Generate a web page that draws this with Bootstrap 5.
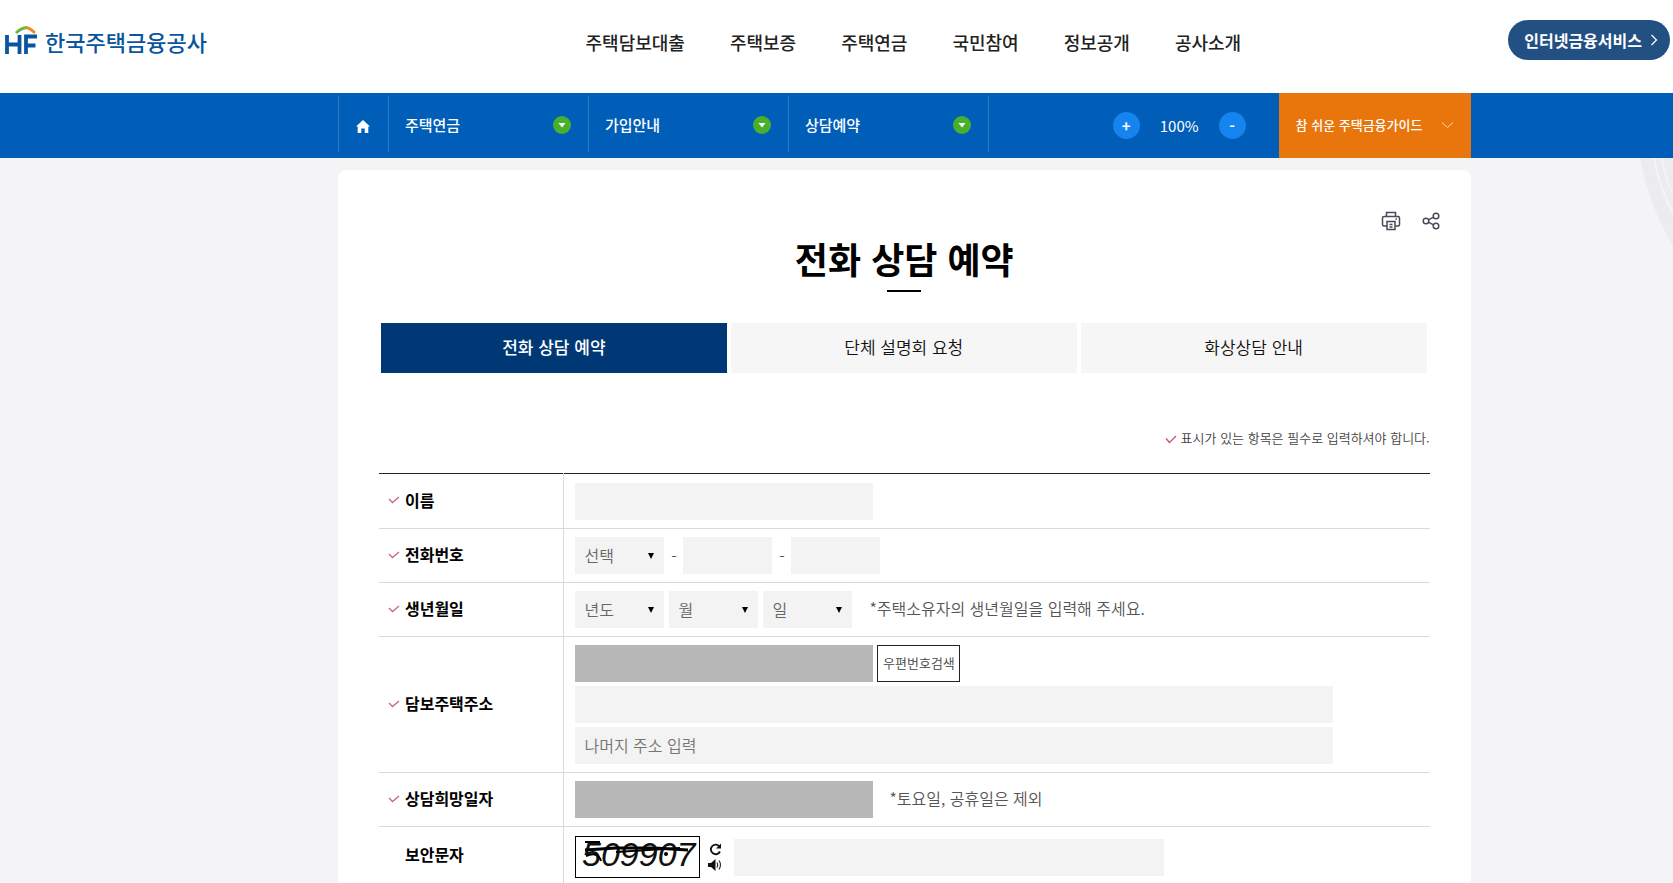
<!DOCTYPE html>
<html lang="ko">
<head>
<meta charset="utf-8">
<meta name="viewport" content="width=device-width, initial-scale=1">
<title>전화 상담 예약 - 한국주택금융공사</title>
<link href="https://cdn.jsdelivr.net/npm/bootstrap@5.3.0/dist/css/bootstrap.min.css" rel="stylesheet">
<style>
  body { font-family: "Noto Sans CJK KR", "Noto Sans", sans-serif; font-size: 16px; line-height: 24px; background: #f4f4f6; color: #222; }
  a { color: inherit; text-decoration: none; }
  .site-top { height: 93px; background: #fff; }
  .side-brand { flex: 0 0 35%; }
  .logo-name { font-size: 22px; font-weight: 500; color: #0a55a0; }
  .gnb { gap: 45px; font-size: 18px; font-weight: 500; color: #222; margin-bottom: 10px; }
  .side-link { margin-bottom: 13px; padding-right: 3px; }
  .pill { height: 40px; border: 0; border-radius: 20px; background: #235083; color: #fff; font-size: 16px; font-weight: 700; padding: 0 12px 0 16px; }
  .inset { padding-left: 20.2%; padding-right: 12.1%; }
  .crumbs { background: #005eb8; color: #fff; height: 65px; font-size: 15px; }
  .crumb { height: 56px; border: 0; border-left: 1px solid #2f7cc8; background: none; color: #fff; font-weight: 500; margin-bottom: 3px; }
  .crumb-home { width: 50px; }
  .crumb-menu { width: 200px; padding: 2px 17px 0 16px; }
  .crumb-end { width: 1px; padding: 0; }
  .zoom-set { margin-right: 33px; }
  .round-btn { width: 27px; height: 27px; border: 0; border-radius: 50%; background: #1684ee; color: #fff; font-weight: 700; line-height: 25px; padding: 0; }
  .guide { width: 192px; height: 65px; border: 0; background: #e8760c; color: #fff; font-size: 13px; font-weight: 500; padding: 0 17px 2px; }
  .sheet { background: #fff; border-radius: 8px 8px 0 0; padding: 37px 41px 0; margin-top: 12px; }
  .page-title { font-size: 36px; line-height: 46px; font-weight: 700; color: #000; margin: 0; }
  .title-rule { width: 34px; height: 2px; background: #000; margin: 9px auto 31px; }
  .tools { margin-right: -12px; gap: 18px; }
  .tools button { border: 0; background: none; padding: 0; width: 22px; height: 28px; line-height: 0; }
  .tabs-row { gap: 4px; margin: 0 3px 0 2px; }
  .tabs-row a { flex: 1 1 0; height: 50px; line-height: 48px; background: #f6f6f6; color: #111; font-size: 17px; font-weight: 350; }
  .tabs-row a.active { background: #003876; color: #fff; font-weight: 500; }
  .must { font-size: 13px; color: #444; font-weight: 350; margin: 53px 0 23px; }
  .form-grid { width: 100%; border-top: 1px solid #222; font-weight: 350; color: #555; }
  .form-grid th, .form-grid td { border-bottom: 1px solid #d9d9d9; padding: 8px 0; }
  .form-grid th { width: 185px; border-right: 1px solid #d9d9d9; padding: 6px 0 9px 9px; color: #000; font-weight: 700; }
  .form-grid td { padding-left: 11px; }
  .form-grid tr:first-child td { padding-top: 9px; }
  .form-grid tr:last-child > * { border-bottom: 0; }
  .form-grid tr:last-child td { padding-top: 9px; padding-bottom: 6px; }
  .tick { width: 17px; display: inline-block; line-height: 0; }
  .field { height: 37px; border: 0; border-radius: 0; background-color: #f3f3f3; padding: 0 9px 2px; font-size: 16px; font-weight: 350; color: #666; }
  .field::placeholder { color: #757575; opacity: 1; }
  .field-off { background-color: #b7b7b7; }
  .dash { width: 19px; text-align: center; }
  .note { padding-bottom: 3px; }
  .dates { gap: 5px; }
  .w-name { width: 298px; }
  .w-part { width: 89px; }
  .w-addr { width: 90%; max-width: 758px; }
  .w-code { width: 430px; }
  select.field { appearance: none; background-image: url("data:image/svg+xml,%3Csvg xmlns='http://www.w3.org/2000/svg' width='6' height='6'%3E%3Cpath d='M0 0h6L3 6z' fill='%23000'/%3E%3C/svg%3E"); background-repeat: no-repeat; background-position: right 10px center; }
  .zip-btn { height: 37px; width: 83px; border: 1px solid #222; background: #fff; color: #444; font-size: 13px; font-weight: 350; padding: 0 0 1px; }
  .captcha { width: 125px; height: 42px; border: 1px solid #000; background: #fff; }
  .mini button { border: 0; background: none; padding: 0; line-height: 0; width: 14px; height: 16px; }
  .deco { position: absolute; right: 0; top: 0; }
</style>
</head>
<body class="d-flex flex-column min-vh-100">

<header class="site-top d-flex align-items-center">
  <div class="side-brand">
    <a href="#" class="d-inline-flex align-items-center ps-1 pb-1 mb-2">
      <svg width="33" height="30" viewBox="0 0 33 30" aria-hidden="true">
        <path d="M3 9V28M15.500 9V28M3 18.500H15.500M22 28V10.500H33M22 19.500H31.500" fill="none" stroke="#0a55a0" stroke-width="3.800"/>
        <path d="M12 7Q17 2 23 1.500" fill="none" stroke="#6fb43f" stroke-width="2.800"/>
        <path d="M22 1.500Q26 2 31 7" fill="none" stroke="#ee8a2c" stroke-width="2.800"/>
      </svg>
      <span class="logo-name ms-2">한국주택금융공사</span>
    </a>
  </div>
  <nav class="gnb d-flex" aria-label="주 메뉴">
    <a href="#">주택담보대출</a><a href="#">주택보증</a><a href="#">주택연금</a><a href="#">국민참여</a><a href="#">정보공개</a><a href="#">공사소개</a>
  </nav>
  <div class="side-link ms-auto">
    <button type="button" class="pill d-flex align-items-center">인터넷금융서비스
      <svg class="ms-2" width="8" height="12" viewBox="0 0 8 12" fill="none" stroke="#fff" stroke-width="1.200" aria-hidden="true"><path d="M1.500 1L6.500 6L1.500 11"/></svg>
    </button>
  </div>
</header>

<div class="crumbs inset d-flex align-items-center">
  <a href="#" class="crumb crumb-home d-flex align-items-center justify-content-center pt-1" aria-label="홈">
    <svg width="14" height="13" viewBox="0 0 14 13" fill="#fff" aria-hidden="true"><path d="M7 0L14 6.500H12.300V13H8.700V8.500H5.300V13H1.700V6.500H0z"/></svg>
  </a>
  <button type="button" class="crumb crumb-menu d-flex align-items-center justify-content-between">주택연금
    <svg width="18" height="18" viewBox="0 0 18 18" aria-hidden="true"><circle cx="9" cy="9" r="9" fill="#49b02c"/><path d="M5.500 7h7L9 11.500z" fill="#fff"/></svg></button>
  <button type="button" class="crumb crumb-menu d-flex align-items-center justify-content-between">가입안내
    <svg width="18" height="18" viewBox="0 0 18 18" aria-hidden="true"><circle cx="9" cy="9" r="9" fill="#49b02c"/><path d="M5.500 7h7L9 11.500z" fill="#fff"/></svg></button>
  <button type="button" class="crumb crumb-menu d-flex align-items-center justify-content-between">상담예약
    <svg width="18" height="18" viewBox="0 0 18 18" aria-hidden="true"><circle cx="9" cy="9" r="9" fill="#49b02c"/><path d="M5.500 7h7L9 11.500z" fill="#fff"/></svg></button>
  <span class="crumb crumb-end"></span>
  <div class="zoom-set d-flex align-items-center ms-auto">
    <button type="button" class="round-btn" aria-label="확대">+</button>
    <span class="px-1 mx-3">100%</span>
    <button type="button" class="round-btn" aria-label="축소">-</button>
  </div>
  <button type="button" class="guide d-flex align-items-center justify-content-between">참 쉬운 주택금융가이드
    <svg width="13" height="8" viewBox="0 0 13 8" fill="none" stroke="#fbd5ac" aria-hidden="true"><path d="M1 1.500L6.500 6.500L12 1.500"/></svg>
  </button>
</div>

<main class="inset position-relative flex-grow-1 d-flex flex-column">
  <svg class="deco" width="33" height="90" viewBox="0 0 33 90" aria-hidden="true">
    <path d="M0 0Q9 48 33 88V0z" fill="#ececee"/>
    <path d="M13 0Q19 32 33 58V52Q20 28 15 0z" fill="#f4f4f6"/>
    <path d="M20 0Q24 20 33 38V34Q26 18 23 0z" fill="#f2f2f4"/>
  </svg>
  <section class="sheet flex-grow-1">
    <div class="tools d-flex justify-content-end">
      <button type="button" aria-label="인쇄">
        <svg width="20" height="20" viewBox="0 0 20 20" fill="none" stroke="#4a4a58" stroke-width="1.500" aria-hidden="true"><path d="M5.500 5V1.500H14.500V5M5.500 15H3Q1.500 15 1.500 13.500V7Q1.500 5.500 3 5.500H17Q18.500 5.500 18.500 7V13.500Q18.500 15 17 15H14.500M6 10.500H14V18.500H6zM8.500 13.500H11.500M8.500 16H11.500M14.500 8H16"/></svg>
      </button>
      <button type="button" aria-label="공유">
        <svg width="18" height="18" viewBox="0 0 18 18" fill="none" stroke="#4a4a58" stroke-width="1.500" aria-hidden="true"><circle cx="4" cy="9" r="2.800"/><circle cx="14" cy="4" r="2.800"/><circle cx="14" cy="14" r="2.800"/><path d="M6.500 7.800L11.500 5.200M6.500 10.200L11.500 12.800"/></svg>
      </button>
    </div>
    <h1 class="page-title text-center">전화 상담 예약</h1>
    <div class="title-rule"></div>

    <nav class="tabs-row d-flex text-center" aria-label="상담 종류">
      <a href="#" class="active" aria-current="page">전화 상담 예약</a>
      <a href="#">단체 설명회 요청</a>
      <a href="#">화상상담 안내</a>
    </nav>

    <p class="must text-end">
      <svg width="12" height="9" viewBox="0 0 12 9" fill="none" stroke="#c8506a" stroke-width="1.300" aria-hidden="true"><path d="M1 3.500L4.500 7.500L11 1"/></svg>
      표시가 있는 항목은 필수로 입력하셔야 합니다.
    </p>

    <form>
      <table class="form-grid">
        <tbody>
          <tr>
            <th scope="row"><span class="tick"><svg width="12" height="12" viewBox="0 0 12 12" fill="none" stroke="#c46a80" stroke-width="1.300"><path d="M1 3L4.500 6.500L11 1"/></svg></span><label for="name">이름</label></th>
            <td><input id="name" type="text" class="field w-name d-block"></td>
          </tr>
          <tr>
            <th scope="row"><span class="tick"><svg width="12" height="12" viewBox="0 0 12 12" fill="none" stroke="#c46a80" stroke-width="1.300"><path d="M1 3L4.500 6.500L11 1"/></svg></span><label for="tel1">전화번호</label></th>
            <td><div class="d-flex align-items-center">
              <select id="tel1" class="field w-part"><option>선택</option></select>
              <span class="dash">-</span>
              <input type="text" class="field w-part" aria-label="전화번호 가운데 자리">
              <span class="dash">-</span>
              <input type="text" class="field w-part" aria-label="전화번호 끝자리">
            </div></td>
          </tr>
          <tr>
            <th scope="row"><span class="tick"><svg width="12" height="12" viewBox="0 0 12 12" fill="none" stroke="#c46a80" stroke-width="1.300"><path d="M1 3L4.500 6.500L11 1"/></svg></span><label for="year">생년월일</label></th>
            <td><div class="dates d-flex align-items-center">
              <select id="year" class="field w-part"><option>년도</option></select>
              <select class="field w-part" aria-label="월"><option>월</option></select>
              <select class="field w-part" aria-label="일"><option>일</option></select>
              <span class="note ps-1 ms-2">*주택소유자의 생년월일을 입력해 주세요.</span>
            </div></td>
          </tr>
          <tr>
            <th scope="row"><span class="tick"><svg width="12" height="12" viewBox="0 0 12 12" fill="none" stroke="#c46a80" stroke-width="1.300"><path d="M1 3L4.500 6.500L11 1"/></svg></span><label for="zip">담보주택주소</label></th>
            <td><div class="d-flex flex-column gap-1">
              <div class="d-flex gap-1">
                <input id="zip" type="text" class="field field-off w-name" readonly>
                <button type="button" class="zip-btn">우편번호검색</button>
              </div>
              <input type="text" class="field w-addr" aria-label="주소">
              <input type="text" class="field w-addr" placeholder="나머지 주소 입력" aria-label="나머지 주소">
            </div></td>
          </tr>
          <tr>
            <th scope="row"><span class="tick"><svg width="12" height="12" viewBox="0 0 12 12" fill="none" stroke="#c46a80" stroke-width="1.300"><path d="M1 3L4.500 6.500L11 1"/></svg></span><label for="date">상담희망일자</label></th>
            <td><div class="d-flex align-items-center">
              <input id="date" type="text" class="field field-off w-name" readonly>
              <span class="note ms-3">*토요일, 공휴일은 제외</span>
            </div></td>
          </tr>
          <tr>
            <th scope="row"><span class="tick"></span><label for="code">보안문자</label></th>
            <td><div class="d-flex align-items-center">
              <svg class="captcha" viewBox="0 0 123 40" role="img" aria-label="보안문자">
                <text x="6" y="29" font-family="Liberation Sans, sans-serif" font-style="italic" font-size="34" fill="#111">509907</text>
                <path d="M9 13L40 11L78 11L112 13" fill="none" stroke="#000" stroke-width="3"/>
                <path d="M9 5H24M10 19Q22 14 25 24M40 15L104 11" fill="none" stroke="#000" stroke-width="2"/>
                <circle cx="90" cy="17" r="2"/>
              </svg>
              <div class="mini d-flex flex-column ms-2 me-1 pe-2">
                <button type="button" aria-label="새로고침"><svg width="13" height="13" viewBox="0 0 13 13" fill="none" stroke="#111" stroke-width="1.800"><path d="M10.500 3.500A4.800 4.800 0 1 0 11 8.500"/><path d="M12 .5V5.500H7z" fill="#111" stroke="none"/></svg></button>
                <button type="button" aria-label="음성 듣기"><svg width="14" height="12" viewBox="0 0 14 12" fill="none" stroke="#333" stroke-width="1.200"><path d="M0 4H3L7.500 0V12L3 8H0z" fill="#111" stroke="none"/><path d="M9 3.500Q10.300 6 9 8.500M11 1.500Q14 6 11 10.500"/></svg></button>
              </div>
              <input id="code" type="text" class="field w-code">
            </div></td>
          </tr>
        </tbody>
      </table>
    </form>
  </section>
</main>

<script src="https://cdn.jsdelivr.net/npm/bootstrap@5.3.0/dist/js/bootstrap.bundle.min.js"></script>
</body>
</html>
